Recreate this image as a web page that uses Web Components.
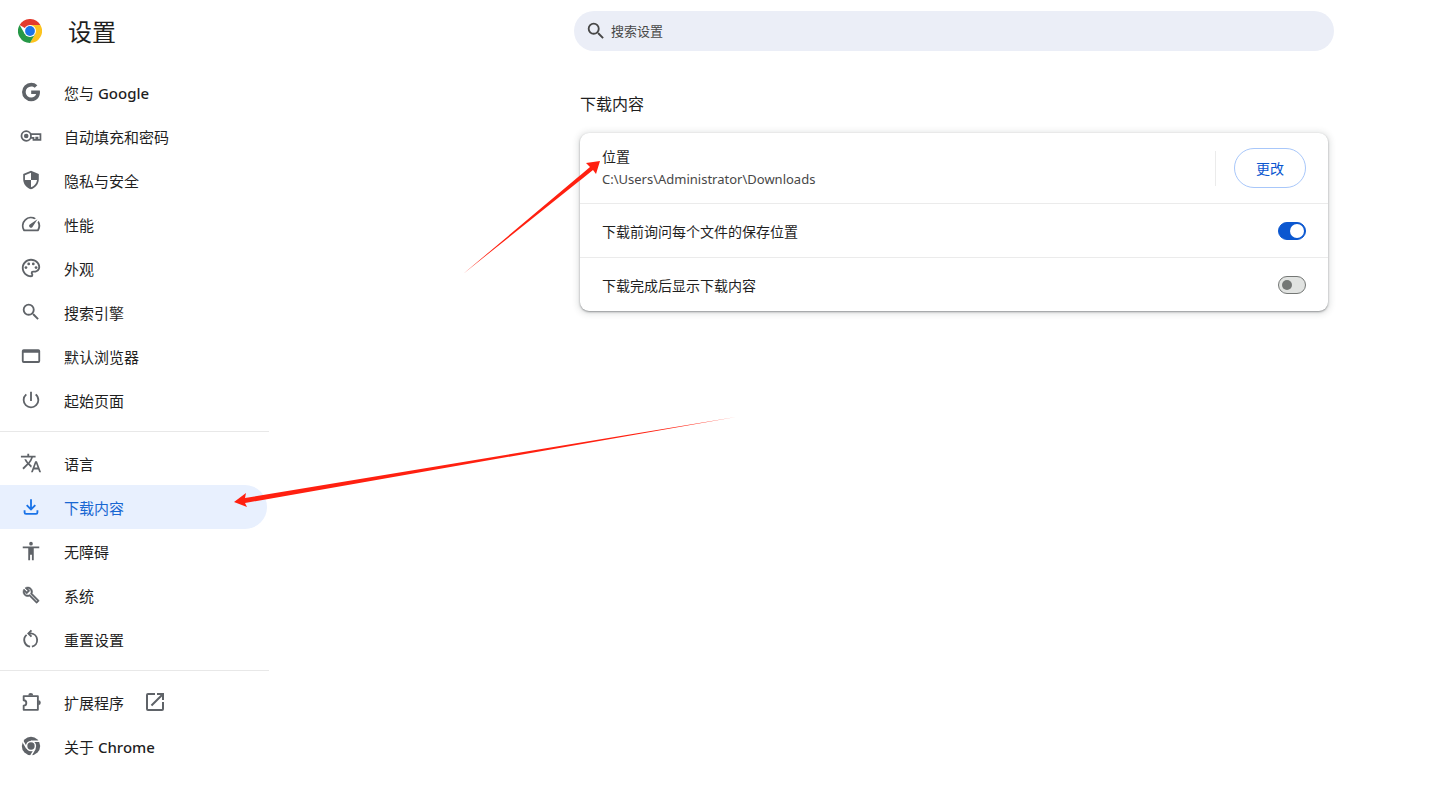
<!DOCTYPE html>
<html lang="zh-CN">
<head>
<meta charset="utf-8">
<meta name="viewport" content="width=device-width, initial-scale=1">
<title>设置</title>
<style>
  body {
    margin: 0;
    background: #fff;
    color: #1f1f1f;
    font-family: "Noto Sans", "Noto Sans CJK SC", sans-serif;
    font-size: 14px;
  }
  b {
    font-weight: 500;
  }
</style>
</head>
<body>
<settings-page>
  <settings-header slot="header"></settings-header>
  <nav-menu slot="menu">
    <nav-item icon="google">您与 <b>Google</b></nav-item>
    <nav-item icon="key">自动填充和密码</nav-item>
    <nav-item icon="shield">隐私与安全</nav-item>
    <nav-item icon="speed">性能</nav-item>
    <nav-item icon="palette">外观</nav-item>
    <nav-item icon="search">搜索引擎</nav-item>
    <nav-item icon="window">默认浏览器</nav-item>
    <nav-item icon="power">起始页面</nav-item>
    <hr>
    <nav-item icon="translate">语言</nav-item>
    <nav-item icon="download" selected>下载内容</nav-item>
    <nav-item icon="accessibility">无障碍</nav-item>
    <nav-item icon="wrench">系统</nav-item>
    <nav-item icon="reset">重置设置</nav-item>
    <hr>
    <nav-item icon="extension" external>扩展程序</nav-item>
    <nav-item icon="chrome">关于 <b>Chrome</b></nav-item>
  </nav-menu>
  <settings-section heading="下载内容">
    <location-row label="位置" path="C:\Users\Administrator\Downloads" action="更改"></location-row>
    <toggle-row label="下载前询问每个文件的保存位置" checked></toggle-row>
    <toggle-row label="下载完成后显示下载内容"></toggle-row>
  </settings-section>
  <pointer-arrow slot="menu-note" to="menu"></pointer-arrow>
</settings-page>

<script>
const ICONS = {
  google: '<path d="M12.2 10.24v3.82h5.45c-.72 2.32-2.65 3.97-5.45 3.97a6.03 6.03 0 1 1 0-12.06c1.5 0 2.87.55 3.92 1.45l2.82-2.81A9.97 9.97 0 0 0 12.2 2a10 10 0 1 0 0 20c8.4 0 10.25-7.85 9.43-11.75z"/>',
  key: '<g fill="none" stroke="currentColor" stroke-width="1.9"><circle cx="6.8" cy="12" r="5.2"/><path d="M12 10h10.3v6.3h-3.2v-2.6h-1.4v2.6h-3V14H12"/></g><circle cx="6.8" cy="12" r="2.5"/>',
  shield: '<path d="M12 2 3.5 5.500v5.600c0 5 3.600 9.700 8.500 10.900 4.900-1.200 8.500-5.900 8.500-10.900V5.500zm0 10h6.600c-.5 3.700-3.100 6.900-6.600 8V12H5.400V6.800L12 4z"/>',
  speed: '<path d="m20.380 8.570-1.230 1.850a8 8 0 0 1-.22 7.580H5.070A8 8 0 0 1 15.580 6.850l1.850-1.230A10 10 0 0 0 3.350 19a2 2 0 0 0 1.720 1h13.850a2 2 0 0 0 1.740-1 10 10 0 0 0-.27-10.440zm-9.790 6.840a2 2 0 0 0 2.830 0l5.660-8.490-8.490 5.660a2 2 0 0 0 0 2.830z"/>',
  palette: '<path d="M12 22C6.490 22 2 17.510 2 12S6.490 2 12 2s10 4.040 10 9c0 3.310-2.690 6-6 6h-1.770c-.28 0-.5.22-.5.5 0 .12.05.23.13.33.41.47.64 1.060.64 1.670A2.500 2.500 0 0 1 12 22zm0-18c-4.410 0-8 3.590-8 8s3.590 8 8 8c.28 0 .5-.22.5-.5a.54.54 0 0 0-.14-.35c-.41-.46-.63-1.050-.63-1.650a2.500 2.500 0 0 1 2.500-2.500H16c2.210 0 4-1.790 4-4 0-3.860-3.590-7-8-7z"/><circle cx="6.500" cy="11.500" r="1.500"/><circle cx="9.500" cy="7.500" r="1.500"/><circle cx="14.500" cy="7.500" r="1.500"/><circle cx="17.500" cy="11.500" r="1.500"/>',
  search: '<path d="M15.500 14h-.79l-.28-.27A6.470 6.470 0 0 0 16 9.500 6.500 6.500 0 1 0 9.500 16c1.610 0 3.090-.59 4.230-1.570l.27.28v.79l5 4.990L20.490 19zm-6 0a4.500 4.500 0 1 1 0-9 4.500 4.500 0 0 1 0 9z"/>',
  window: '<path fill-rule="evenodd" d="M4 4.500h16a2 2 0 0 1 2 2v11a2 2 0 0 1-2 2H4a2 2 0 0 1-2-2v-11a2 2 0 0 1 2-2zM4 8.500v9h16v-9z"/>',
  power: '<path d="M13 3h-2v10h2zm4.830 2.170-1.420 1.420A6.920 6.920 0 0 1 19 12a7 7 0 1 1-11.420-5.420L6.170 5.170A8.930 8.930 0 0 0 3 12a9 9 0 0 0 18 0c0-2.740-1.230-5.180-3.170-6.830z"/>',
  translate: '<path d="m12.870 15.070-2.540-2.510.03-.03A17.520 17.520 0 0 0 14.070 6H17V4h-7V2H8v2H1v1.990h11.170C11.500 7.920 10.440 9.750 9 11.350 8.070 10.320 7.300 9.190 6.690 8h-2c.73 1.630 1.730 3.170 2.980 4.560l-5.090 5.020L4 19l5-5 3.110 3.110zM18.500 10h-2L12 22h2l1.120-3h4.750L21 22h2zm-2.620 7 1.620-4.330L19.120 17z"/>',
  download: '<path fill="none" stroke="currentColor" stroke-width="2" d="M12 3.500v11M7.300 10l4.700 4.700 4.700-4.700M5 15.500V18a1.500 1.500 0 0 0 1.500 1.500h11A1.500 1.500 0 0 0 19 18v-2.500"/>',
  accessibility: '<path d="M12 2a2 2 0 1 1 0 4 2 2 0 0 1 0-4zm9 7h-6v13h-2v-6h-2v6H9V9H3V7h18z"/>',
  wrench: '<path stroke="currentColor" stroke-width=".7" transform="translate(2.500 2.500) scale(.8)" d="m22.610 18.990-9.080-9.080c.93-2.340.45-5.100-1.440-7C9.790.61 6.210.4 3.660 2.260L7.500 6.110 6.080 7.520 2.250 3.690C.39 6.230.6 9.820 2.900 12.110c1.860 1.860 4.570 2.350 6.890 1.480l9.110 9.110c.39.39 1.020.39 1.410 0l2.300-2.300c.4-.38.4-1.010 0-1.410zm-3 1.600-9.460-9.460c-.61.45-1.290.72-2 .82-1.360.2-2.790-.21-3.830-1.250C3.370 9.760 2.930 8.500 3 7.260l3.090 3.090 4.240-4.240-3.090-3.090c1.240-.07 2.490.37 3.440 1.310a4.470 4.470 0 0 1 1.240 3.960c-.12.71-.42 1.370-.88 1.960l9.450 9.450z"/>',
  reset: '<g fill="none" stroke="currentColor" stroke-width="2"><path d="M13 20.300A7.300 7.300 0 0 0 12 5.900H9.500M7.200 7.500A7.300 7.300 0 0 0 11 20.300"/><path d="M12.500 2.500 9.100 5.900l3.400 3.400"/></g>',
  extension: '<path fill="none" stroke="currentColor" stroke-width="2" stroke-linejoin="round" d="M4 5.500h15.500v15H4v-4.600a2.900 2.900 0 0 0 0-5.800z"/><path d="M9 5a2.700 2.700 0 0 1 5.400 0zM20 10.200a2.700 2.700 0 0 1 0 5.400z"/>',
  external: '<path d="M19 19H5V5h7V3H5a2 2 0 0 0-2 2v14a2 2 0 0 0 2 2h14a2 2 0 0 0 2-2v-7h-2zM14 3v2h3.590l-9.830 9.830 1.410 1.410L19 6.410V10h2V3z"/>',
  chrome: '<circle cx="12" cy="12" r="10"/><path fill="none" stroke="#fff" stroke-width="1.800" d="M12 6.800h10M7.500 14.600l-5-8.660M16.500 14.600l-5 8.660"/><circle cx="12" cy="12" r="5.600" fill="#fff"/><circle cx="12" cy="12" r="4"/>',
  logo: '<path fill="#e33b2e" d="M12 12 1.600 6A12 12 0 0 1 22.400 6z"/><path fill="#fcc31e" d="M12 12V6h10.400A12 12 0 0 1 12 24l5.200-9z"/><path fill="#269847" d="M1.600 6A12 12 0 0 0 12 24l5.200-9L12 12 6.800 15z"/><circle cx="12" cy="12" r="6" fill="#fff"/><circle cx="12" cy="12" r="4.900" fill="#1b74e8"/>'
};

const svg = (name) => `<svg viewBox="0 0 24 24" fill="currentColor" aria-hidden="true">${ICONS[name]}</svg>`;

class SettingsPage extends HTMLElement {
  connectedCallback() {
    this.attachShadow({ mode: 'open' }).innerHTML = `
      <style>
        :host {
          --menu-width: 269px;
          --columns: minmax(0, 30fr) minmax(auto, 748px) minmax(0, 11fr);
          display: block;
          position: relative;
          min-height: 100vh;
        }
        .body {
          display: grid;
          grid-template-columns: var(--menu-width) var(--columns);
        }
        main {
          grid-column: 3;
        }
      </style>
      <slot name="header"></slot>
      <div class="body">
        <slot name="menu"></slot>
        <main><slot></slot></main>
      </div>
      <slot name="menu-note"></slot>
    `;
  }
}

class SettingsHeader extends HTMLElement {
  connectedCallback() {
    this.attachShadow({ mode: 'open' }).innerHTML = `
      <style>
        :host {
          display: grid;
          grid-template-columns: var(--menu-width) var(--columns);
          align-items: center;
          height: 62px;
        }
        .brand {
          display: flex;
          align-items: center;
          gap: 26px;
          padding-left: 18px;
        }
        .brand svg {
          width: 24px;
          height: 24px;
        }
        h1 {
          margin: 0;
          padding-top: 2px;
          font-size: 24px;
          line-height: 32px;
          font-weight: 400;
        }
        .search {
          grid-column: 3;
          display: flex;
          align-items: center;
          gap: 4px;
          height: 40px;
          margin: 0 -6px;
          padding: 0 11px;
          box-sizing: border-box;
          border-radius: 20px;
          background: #ebeef7;
          color: #474747;
        }
        .search svg {
          width: 22px;
          height: 22px;
          flex: none;
        }
        input {
          flex: 1;
          min-width: 0;
          padding: 0;
          border: 0;
          outline: 0;
          background: none;
          color: inherit;
          font-family: inherit;
          font-size: 13px;
          line-height: 20px;
        }
        input::placeholder {
          color: #474747;
          opacity: 1;
        }
      </style>
      <div class="brand">${svg('logo')}<h1>设置</h1></div>
      <label class="search">${svg('search')}<input type="search" placeholder="搜索设置" aria-label="搜索设置"></label>
    `;
  }
}

class NavMenu extends HTMLElement {
  connectedCallback() {
    this.attachShadow({ mode: 'open' }).innerHTML = `
      <style>
        :host {
          display: block;
          padding: 8px 0;
        }
        nav {
          display: flex;
          flex-direction: column;
        }
        ::slotted(hr) {
          width: 100%;
          height: 1px;
          margin: 9px 0;
          border: 0;
          background: #e8e8e8;
        }
      </style>
      <nav><slot></slot></nav>
    `;
  }
}

class NavItem extends HTMLElement {
  connectedCallback() {
    const external = this.hasAttribute('external') ? svg('external') : '';
    const current = this.hasAttribute('selected') ? 'aria-current="page"' : '';
    this.attachShadow({ mode: 'open' }).innerHTML = `
      <style>
        :host {
          display: block;
          margin-right: 2px;
        }
        a {
          display: flex;
          align-items: center;
          gap: 22px;
          height: 44px;
          padding-left: 20px;
          border-radius: 0 22px 22px 0;
          color: #1f1f1f;
          font-size: 15px;
          text-decoration: none;
        }
        svg {
          width: 22px;
          height: 22px;
          color: #5f6368;
        }
        span + svg {
          width: 24px;
          height: 24px;
          margin-left: -3px;
        }
        :host([selected]) a {
          background: #e8f0fe;
          color: #1967d2;
        }
        :host([selected]) svg {
          color: #1a73e8;
        }
      </style>
      <a href="#" ${current}>${svg(this.getAttribute('icon'))}<span><slot></slot></span>${external}</a>
    `;
  }
}

class SettingsSection extends HTMLElement {
  connectedCallback() {
    this.attachShadow({ mode: 'open' }).innerHTML = `
      <style>
        :host {
          display: block;
          padding-top: 30px;
        }
        h2 {
          margin: 0 0 17px;
          font-size: 16px;
          line-height: 24px;
          font-weight: 400;
        }
        .card {
          position: relative;
          border-radius: 9px;
          background: #fff;
          box-shadow: 0 1px 2px rgba(60, 64, 67, 0.5), 0 1px 6px 2px rgba(60, 64, 67, 0.15);
        }
        ::slotted(:not(:first-child)) {
          border-top: 1px solid #ebebeb;
        }
      </style>
      <h2>${this.getAttribute('heading')}</h2>
      <div class="card"><slot></slot><pointer-arrow to="card"></pointer-arrow></div>
    `;
  }
}

class LocationRow extends HTMLElement {
  connectedCallback() {
    this.attachShadow({ mode: 'open' }).innerHTML = `
      <style>
        :host {
          display: flex;
          align-items: center;
          height: 70px;
          padding: 0 22px;
        }
        .text {
          flex: 1;
          line-height: 22px;
        }
        .path {
          color: #474747;
          font-size: 13px;
        }
        .rule {
          width: 1px;
          height: 35px;
          margin: 0 18px;
          background: #ebebeb;
        }
        button {
          height: 40px;
          padding: 0 21px;
          border: 1px solid #a8c7fa;
          border-radius: 20px;
          background: #fff;
          color: #0b57d0;
          font: inherit;
        }
      </style>
      <div class="text">
        <div>${this.getAttribute('label')}</div>
        <div class="path">${this.getAttribute('path')}</div>
      </div>
      <div class="rule"></div>
      <button type="button">${this.getAttribute('action')}</button>
    `;
  }
}

class ToggleRow extends HTMLElement {
  connectedCallback() {
    this.attachShadow({ mode: 'open' }).innerHTML = `
      <style>
        :host {
          display: block;
        }
        label {
          display: flex;
          align-items: center;
          justify-content: space-between;
          height: 53px;
          padding: 0 22px;
        }
        input {
          appearance: none;
          display: flex;
          align-items: center;
          width: 28px;
          height: 18px;
          margin: 0;
          padding: 0 3px;
          box-sizing: border-box;
          border: 1px solid #747775;
          border-radius: 9px;
          background: #e1e3e1;
        }
        input::before {
          content: "";
          width: 10px;
          height: 10px;
          border-radius: 50%;
          background: #747775;
        }
        input:checked {
          justify-content: flex-end;
          padding: 0 1px;
          border-color: #0b57d0;
          background: #0b57d0;
        }
        input:checked::before {
          width: 14px;
          height: 14px;
          background: #fff;
        }
      </style>
      <label>${this.getAttribute('label')}<input type="checkbox" role="switch" ${this.hasAttribute('checked') ? 'checked' : ''}></label>
    `;
  }
}

// Tapered red arrows drawn over the page
class PointerArrow extends HTMLElement {
  connectedCallback() {
    const card = this.getAttribute('to') === 'card';
    const box = card ? '0 0 140 142' : '0 0 504 92';
    const points = card
      ? '0,141 127,34 123,30 137,28 133,41 130,37'
      : '503,1 12,82 13,77 1,86 14,91 12,87';
    this.attachShadow({ mode: 'open' }).innerHTML = `
      <style>
        :host {
          position: absolute;
          pointer-events: none;
          left: 233px;
          top: 416px;
          width: 504px;
          height: 92px;
        }
        :host([to="card"]) {
          left: -117px;
          top: 0;
          width: 140px;
          height: 142px;
        }
        svg {
          display: block;
          width: 100%;
          height: 100%;
        }
      </style>
      <svg viewBox="${box}" aria-hidden="true"><polygon fill="#ff2010" points="${points}"/></svg>
    `;
  }
}

customElements.define('settings-page', SettingsPage);
customElements.define('settings-header', SettingsHeader);
customElements.define('nav-menu', NavMenu);
customElements.define('nav-item', NavItem);
customElements.define('settings-section', SettingsSection);
customElements.define('location-row', LocationRow);
customElements.define('toggle-row', ToggleRow);
customElements.define('pointer-arrow', PointerArrow);
</script>
</body>
</html>
